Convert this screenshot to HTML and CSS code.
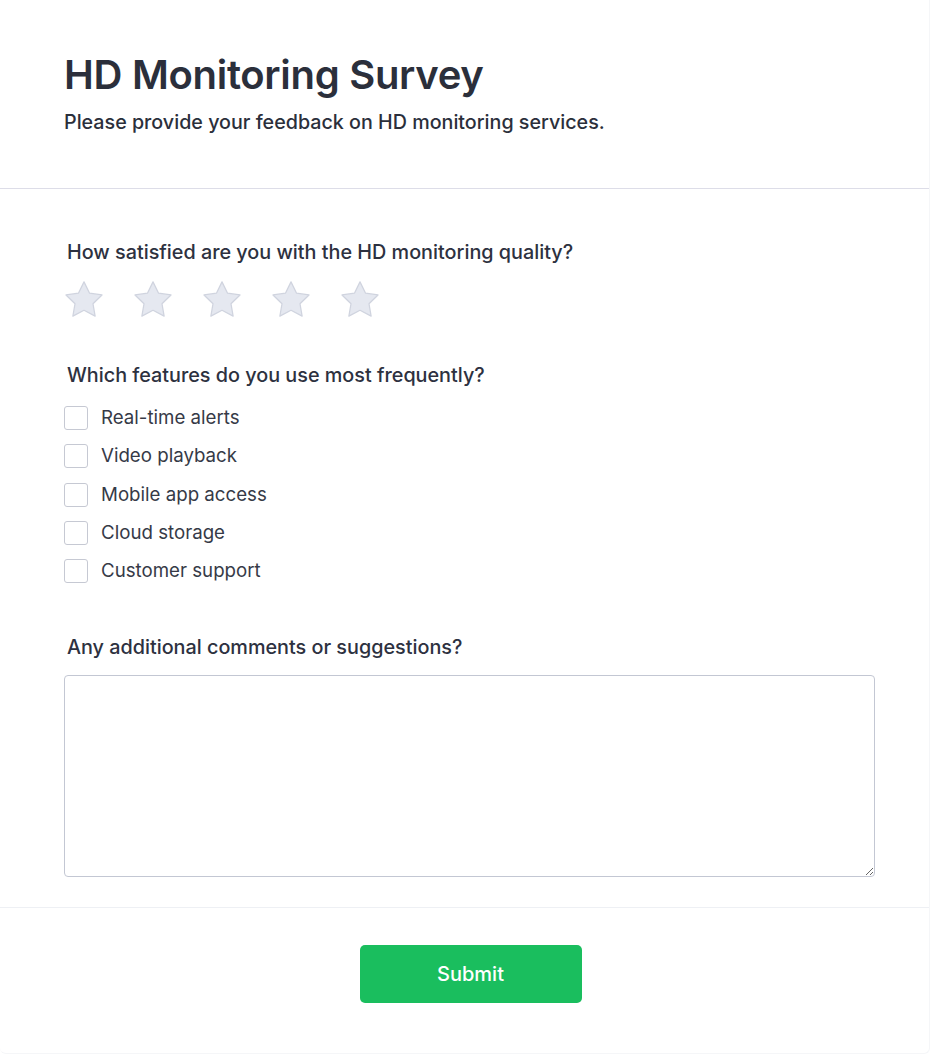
FILE: index.html
```html
<!DOCTYPE html>
<html lang="en">
<head>
<meta charset="utf-8">
<title>HD Monitoring Survey</title>
<link rel="stylesheet" href="styles.css">
</head>
<body>
<div class="card">
  <header class="head">
    <h1 class="title">HD Monitoring Survey</h1>
    <p class="subtitle">Please provide your feedback on HD monitoring services.</p>
  </header>
  <main class="content">
    <section class="q q-rating">
      <h2 class="q-label">How satisfied are you with the HD monitoring quality?</h2>
      <div class="stars">
        <svg class="star" viewBox="1.5 1.5 21 20" width="38" height="36"><path d="M12 2l3.09 6.26L22 9.27l-5 4.870 1.18 6.88L12 17.77l-6.18 3.25L7 14.14 2 9.27l6.91-1.01L12 2z"/></svg>
        <svg class="star" viewBox="1.5 1.5 21 20" width="38" height="36"><path d="M12 2l3.09 6.26L22 9.27l-5 4.87 1.18 6.88L12 17.77l-6.18 3.25L7 14.14 2 9.27l6.91-1.01L12 2z"/></svg>
        <svg class="star" viewBox="1.5 1.5 21 20" width="38" height="36"><path d="M12 2l3.09 6.26L22 9.27l-5 4.87 1.18 6.88L12 17.77l-6.18 3.25L7 14.14 2 9.27l6.91-1.01L12 2z"/></svg>
        <svg class="star" viewBox="1.5 1.5 21 20" width="38" height="36"><path d="M12 2l3.09 6.26L22 9.27l-5 4.87 1.18 6.88L12 17.77l-6.18 3.25L7 14.14 2 9.27l6.91-1.01L12 2z"/></svg>
        <svg class="star" viewBox="1.5 1.5 21 20" width="38" height="36"><path d="M12 2l3.09 6.26L22 9.27l-5 4.87 1.18 6.88L12 17.77l-6.18 3.25L7 14.14 2 9.27l6.91-1.01L12 2z"/></svg>
      </div>
    </section>
    <section class="q q-features">
      <h2 class="q-label">Which features do you use most frequently?</h2>
      <div class="options">
        <label class="opt"><span class="box"></span><span class="opt-text">Real-time alerts</span></label>
        <label class="opt"><span class="box"></span><span class="opt-text">Video playback</span></label>
        <label class="opt"><span class="box"></span><span class="opt-text">Mobile app access</span></label>
        <label class="opt"><span class="box"></span><span class="opt-text">Cloud storage</span></label>
        <label class="opt"><span class="box"></span><span class="opt-text">Customer support</span></label>
      </div>
    </section>
    <section class="q q-comments">
      <h2 class="q-label">Any additional comments or suggestions?</h2>
      <textarea class="comments"></textarea>
    </section>
  </main>
  <footer class="foot">
    <button class="submit" type="button">Submit</button>
  </footer>
</div>
</body>
</html>
```

FILE: styles.css
```css
* { box-sizing: border-box; }
html, body { margin: 0; padding: 0; background: #ffffff; }
body {
  font-family: Inter, "Noto Sans", sans-serif;
  color: #2d3140;
}
.card {
  width: 930px;
  min-height: 1054px;
  background: #fff;
  border-right: 1px solid #f5f6f8;
  border-bottom: 1px solid #f5f6f8;
  border-radius: 0 0 6px 6px;
}
.head {
  padding: 52px 64px 52px;
  border-bottom: 1px solid #dddde8;
}
.title {
  margin: 0;
  font-size: 40px;
  line-height: 46px;
  font-weight: 600;
  letter-spacing: -0.3px;
  color: #2b2f3b;
}
.subtitle {
  margin: 10px 0 0;
  font-size: 19.7px;
  line-height: 28px;
  font-weight: 500;
  color: #2b2f3b;
}
.content {
  padding: 49px 55px 30px 64px;
}
.q-label {
  margin: 0 0 0 3px;
  font-size: 19.8px;
  line-height: 28px;
  font-weight: 500;
  color: #2d3140;
}
.stars {
  display: flex;
  gap: 31px;
  margin-top: 14px;
  padding-left: 1px;
  height: 38px;
  align-items: center;
}
.star path {
  fill: #e5e8f0;
  stroke: #d0d4df;
  stroke-width: 0.7;
  stroke-linejoin: round;
}
.q-features { margin-top: 43px; }
.options {
  display: flex;
  flex-direction: column;
  gap: 8.25px;
  margin-top: 14px;
}
.opt {
  display: flex;
  align-items: center;
  gap: 13px;
  height: 30px;
}
.box {
  width: 24px;
  height: 24px;
  border: 1.5px solid #c6c9d3;
  border-radius: 3px;
  background: #fff;
  flex: none;
}
.opt-text {
  font-size: 18.7px;
  line-height: 28px;
  color: #363a47;
}
.q-comments { margin-top: 47px; }
.comments {
  display: block;
  margin-top: 14px;
  width: 811px;
  height: 202px;
  border: 1px solid #c3c7d3;
  border-radius: 4px;
  background: #fff;
  font-family: inherit;
  resize: vertical;
}
.foot {
  border-top: 1px solid #eef0f4;
  padding: 37px 0 40px 12px;
  display: flex;
  justify-content: center;
}
.submit {
  width: 222px;
  height: 58px;
  border: none;
  border-radius: 5px;
  background: #1abe5e;
  color: #fff;
  font-family: Inter, "Noto Sans", sans-serif;
  font-size: 20px;
  font-weight: 500;
}
```
